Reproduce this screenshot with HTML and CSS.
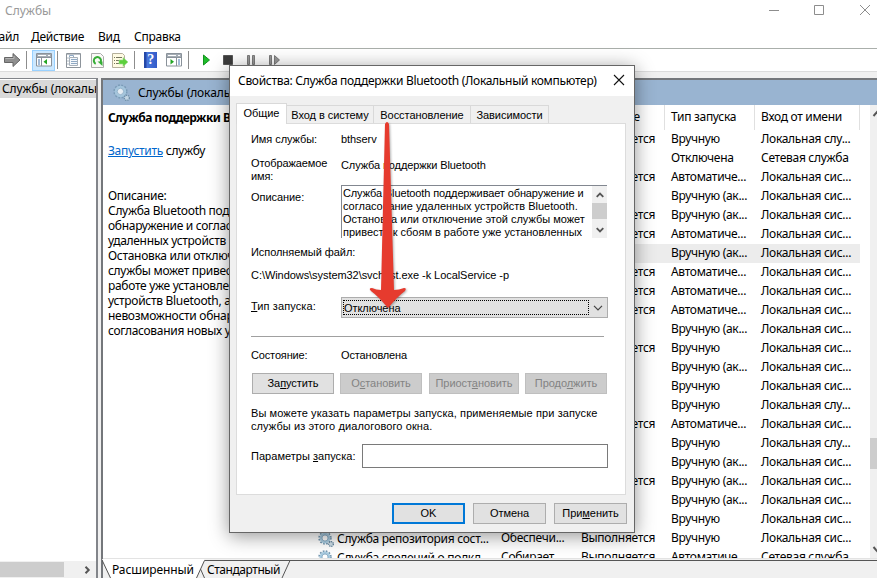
FILE: index.html
```html
<!DOCTYPE html>
<html lang="ru">
<head>
<meta charset="utf-8">
<title>Службы</title>
<link rel="stylesheet" href="styles.css">
</head>
<body>
<svg class="defs" width="0" height="0">
  <symbol id="gear" viewBox="0 0 16 16">
    <circle cx="7" cy="7" r="5.9" fill="none" stroke="#6f93ad" stroke-width="1.6" stroke-dasharray="1.7 1.4"/>
    <circle cx="7" cy="7" r="4.2" fill="#fff" stroke="#a8cbe0" stroke-width="2.4"/>
    <circle cx="7" cy="7" r="3" fill="#fff" stroke="#6f9ab8" stroke-width=".7"/>
    <circle cx="13" cy="13" r="2.4" fill="#cfdfe9" stroke="#62849c" stroke-width="1.3" stroke-dasharray="1.2 .8"/>
  </symbol>
</svg>
<div class="window">
  <header class="titlebar">
    <span class="caption">Службы</span>
    <svg class="winbtns" width="104" height="22" viewBox="0 0 104 22" fill="none" stroke="#8d8d8d">
      <path d="M2 10.500h10M47.500 5.500h9v9h-9zM93 5l10 10M103 5L93 15"/>
    </svg>
  </header>
  <nav class="menu"><span class="m-file">Файл</span><span class="m-action">Действие</span><span class="m-view">Вид</span><span>Справка</span></nav>
  <div class="toolbar">
    <svg class="i-fwd" width="17" height="16" viewBox="0 0 17 16"><path d="M.5 5.500h8.500V1.500L16 8l-7 6.500v-4H.5z" fill="#8f8f8f" stroke="#666"/><path d="M1.500 6.500h8.500V4" fill="none" stroke="#b5b5b5"/></svg>
    <i class="sep s1"></i>
    <span class="pressed"><svg width="16" height="14" viewBox="0 0 16 14"><path d="M.5.5h15v12.500H.5z" fill="#fff" stroke="#8a929a"/><path d="M1 1h14v3H1z" fill="#a5adb5"/><path d="M2 2.500h8M12 2.500h2" stroke="#fff"/><path d="M5.500 5v8M1 4.500h14" stroke="#8a929a"/><path d="M2 7h2M2 9h2M2 11h2" stroke="#4879b0"/><path d="M11 6v5.500L7.500 8.700z" fill="#23a523"/></svg></span>
    <i class="sep s2"></i>
    <svg class="i-prop" width="15" height="15" viewBox="0 0 15 15"><path d="M.5.5h14v14H.5z" fill="#fff" stroke="#8d949b"/><path d="M1 1.500h13" stroke="#bcc2c8"/><path d="M3.500 4.500h8v8h-8z" fill="#f5f8fb" stroke="#a7b0b9"/><path d="M3.500 4V2.500h4V4M5 6.500h6M5 8.500h6M5 10.500h6" fill="none" stroke="#8fa9c4"/><path d="M1.500 5h1M1.500 8h1M1.500 11h1" stroke="#60788f"/></svg>
    <svg class="i-refresh" width="13" height="15" viewBox="0 0 13 15"><path d="M.5.5h9l3 3v11H.5z" fill="#f9f9f6" stroke="#aaa"/><path d="M4.700 10.800a3.600 3.600 0 1 1 4.800-1.300" fill="none" stroke="#36ad36" stroke-width="2"/><path d="M6.500 8.500h5v4.500z" fill="#36ad36"/></svg>
    <svg class="i-export" width="17" height="15" viewBox="0 0 17 15"><path d="M.5.5h10l2 2v12H.5z" fill="#fffbe3" stroke="#b5b09b"/><path d="M2 4.500h1M2 7.500h1M2 10.500h1M4 4.500h6M4 7.500h6M4 10.500h5" stroke="#77765f"/><path d="M7 7h4V4.500L16 9l-5 4.500V11H7z" fill="#5dd03c" stroke="#a0dc8e" stroke-width=".6"/></svg>
    <i class="sep s3"></i>
    <span class="help">?</span>
    <svg class="i-view" width="16" height="14" viewBox="0 0 16 14"><path d="M.5.5h15v12.500H.5z" fill="#fff" stroke="#8a929a"/><path d="M1 1h14v3H1z" fill="#a5adb5"/><path d="M2 2.500h8M12 2.500h2" stroke="#fff"/><path d="M10.500 5v8M1 4.500h14" stroke="#8a929a"/><path d="M12 7h2M12 9h2M12 11h2" stroke="#4879b0"/><path d="M4.500 6v5.500L8 8.700z" fill="#23a523"/></svg>
    <i class="sep s4"></i>
    <svg class="i-run" width="78" height="12" viewBox="0 0 78 12"><path d="M.5 1l6 5-6 5z" fill="#1fbd2b" stroke="#149420"/><path d="M20.500 1.500h9v9h-9z" fill="#3c3c3c" stroke="#555"/><path d="M44.500 1.500h2v9h-2zM49.500 1.500h2v9h-2zM66.500 1.500h2v9h-2zM71.500 1.500l5 4.500-5 4.500z" fill="#999" stroke="#666" stroke-width=".8"/></svg>
  </div>
  <main class="panes">
    <aside class="tree">
      <div class="node">Службы (локальные)</div>
      <div class="hscroll"><i class="hthumb"></i><svg width="8" height="8" viewBox="0 0 8 8"><path d="M1.500.8L4.700 4 1.500 7.200" fill="none" stroke="#555" stroke-width="2"/></svg></div>
    </aside>
    <section class="right">
      <div class="band"><svg width="17" height="17"><use href="#gear"/></svg><span>Службы (локальные)</span></div>
      <div class="content">
        <div class="info">
          <b>Служба поддержки Bluetooth</b>
          <p class="start"><a>Запустить</a> службу</p>
          <p class="desc">Описание:<br>Служба Bluetooth поддерживает<br>обнаружение и согласование<br>удаленных устройств Bluetooth.<br>Остановка или отключение этой<br>службы может привести к сбоям в<br>работе уже установленных<br>устройств Bluetooth, а также к<br>невозможности обнаружения и<br>согласования новых устройств.</p>
        </div>
        <div class="list" id="list">
          <div class="row head"><span>Имя</span><span>Описание</span><span>Состояние</span><span>Тип запуска</span><span>Вход от имени</span></div>
        </div>
        <div class="vscroll"><svg class="up" width="7" height="9" viewBox="0 0 7 9"><path d="M3.500 7L8 2" stroke="#555" stroke-width="2"/></svg><i class="vthumb"></i><svg class="down" width="7" height="9" viewBox="0 0 7 9"><path d="M3.500 2L8 7" stroke="#555" stroke-width="2"/></svg></div>
      </div>
      <div class="viewtabs">
        <svg class="tabshape" width="776" height="19" viewBox="0 0 776 19"><path d="M0 0h102.500l-8 19H9z" fill="#fff"/><path d="M0 1l8.500 18M94.500 19l8-17.500H776M98.500 10l4 9M180 19l8-17.500" fill="none" stroke="#555"/></svg>
        <span class="vt1">Расширенный</span><span class="vt2">Стандартный</span>
      </div>
    </section>
  </main>
</div>

<div class="dialog">
  <div class="dtitle"><span>Свойства: Служба поддержки Bluetooth (Локальный компьютер)</span><svg width="12" height="12" viewBox="0 0 12 12"><path d="M1 1l10 10M11 1L1 11" stroke="#111" stroke-width="1.1"/></svg></div>
  <div class="dtabs"><span class="active">Общие</span><span class="t2">Вход в систему</span><span class="t3">Восстановление</span><span class="t4">Зависимости</span></div>
  <div class="page">
    <div class="field f1"><label>Имя службы:</label><span>bthserv</span></div>
    <div class="field f2"><label>Отображаемое<br>имя:</label><span>Служба поддержки Bluetooth</span></div>
    <div class="field f3"><label>Описание:</label>
      <div class="memo"><p><span class="tight">Служба Bluetooth поддерживает обнаружение и</span><br>согласование удаленных устройств Bluetooth.<br>Остановка или отключение этой службы может<br>привести к сбоям в работе уже установленных</p>
        <div class="mscroll"><svg width="8" height="6" viewBox="0 0 8 6"><path d="M.7 4.800L4 1.500l3.300 3.300" fill="none" stroke="#555" stroke-width="1.800"/></svg><i></i><svg width="8" height="6" viewBox="0 0 8 6"><path d="M.7 1.200L4 4.500l3.300-3.300" fill="none" stroke="#555" stroke-width="1.800"/></svg></div>
      </div>
    </div>
    <div class="exe">Исполняемый файл:</div>
    <div class="path">C:\Windows\system32\svchost.exe -k LocalService -p</div>
    <div class="field f4"><label><u>Т</u>ип запуска:</label><div class="combo"><span>Отключена</span><svg width="10" height="6" viewBox="0 0 10 6"><path d="M1 .8L5 4.800 9 .8" fill="none" stroke="#444" stroke-width="1.200"/></svg></div></div>
    <hr>
    <div class="field f5"><label>Состояние:</label><span>Остановлена</span></div>
    <div class="actions"><button>За<u>п</u>устить</button><button disabled>О<u>с</u>тановить</button><button class="wide" disabled>Приост<u>а</u>новить</button><button disabled>Продо<u>л</u>жить</button></div>
    <p class="hint">Вы можете указать параметры запуска, применяемые при запуске<br>службы из этого диалогового окна.</p>
    <div class="params"><label>Параметры <u>з</u>апуска:</label><input type="text"></div>
  </div>
  <div class="footer"><button class="ok">OK</button><button>Отмена</button><button>При<u>м</u>енить</button></div>
</div>
<svg class="arrow" width="44" height="192" viewBox="0 0 44 192"><path d="M18 4q2-4 4 0L27 170q5 0 10-2 3 0 1 3Q30 177 22 187q-1 1.500-2 0Q12 177 4 171q-3-3 1-3 4 2 9 2z" fill="#e63b2e"/></svg>
<script src="list.js"></script>
</body>
</html>
```
FILE: styles.css
```css
* { box-sizing: border-box; }
body { margin: 0; width: 877px; height: 578px; overflow: hidden; background: #f0f0f0; color: #000; font: 12px/15px "Noto Sans", "Open Sans", sans-serif; letter-spacing: -0.3px; white-space: nowrap; }
p { margin: 0; }
svg { display: block; flex: none; }
.defs { position: absolute; }
.window { display: flex; flex-direction: column; height: 578px; }
.titlebar { height: 24px; background: #fff; display: flex; justify-content: space-between; padding: 0 6px 0 5px; color: #999; line-height: 22px; letter-spacing: 0; }
.menu { height: 24px; background: #fff; display: flex; line-height: 25px; letter-spacing: -.25px; }
.m-file { width: 42px; margin-left: -11px; }
.m-action { width: 67px; }
.m-view { width: 36px; }
.toolbar { height: 24px; background: #fff; border-top: 1px solid #aaafab; border-bottom: 1px solid #dcdcdc; display: flex; align-items: center; padding-left: 4px; }
.sep { width: 1px; height: 18px; background: #8d8d8d; flex: none; }
.s1 { margin-left: 5px; }
.s2 { margin-left: 2px; }
.s3 { margin-left: 5px; }
.s4 { margin-left: 6px; }
.pressed { width: 23px; height: 21px; margin-left: 5px; background: #cce8ff; border: 1px solid #99d1ff; display: flex; align-items: center; justify-content: center; }
.i-prop { margin-left: 8px; }
.i-refresh { margin-left: 10px; }
.i-export { margin-left: 8px; }
.i-view { margin-left: 9px; }
.i-run { margin-left: 14px; }
.help { width: 13px; height: 16px; margin-left: 9px; background: linear-gradient(90deg, #2448a8 2px, #4876dc 3px, #335bc8); color: #fff; font: bold 14px/16px "Liberation Serif", serif; text-align: center; }
.panes { flex: 1; display: flex; padding-top: 6px; min-height: 0; }
.tree { width: 98px; flex: none; background: #fff; border-top: 1px solid #82858a; border-right: 2px solid #82858a; display: flex; flex-direction: column; justify-content: space-between; overflow: hidden; }
.node { margin-top: 1px; height: 18px; width: 96px; padding-left: 2px; line-height: 18px; background: #d9d9d9; overflow: hidden; letter-spacing: -.1px; }
.hscroll { height: 17px; background: #f0f0f0; display: flex; align-items: center; }
.hthumb { width: 64px; height: 15px; background: #cdcdcd; margin-right: 20px; }
.right { flex: 1; margin-left: 3px; min-width: 0; border-left: 2px solid #74777b; border-top: 2px solid #74777b; display: flex; flex-direction: column; }
.band { height: 25px; background: #99b4d1; display: flex; align-items: center; padding-left: 10px; letter-spacing: -.1px; }
.band svg { opacity: .75; }
.band span { margin-left: 8px; }
.content { height: 454px; background: #fff; display: flex; border-bottom: 1px solid #e3e3e3; overflow: hidden; flex: none; }
.info { width: 210px; padding: 5px 0 0 5px; flex: none; overflow: hidden; }
.info b { display: block; line-height: 15px; letter-spacing: -.55px; }
.start { margin-top: 18px; }
.start a { color: #0066cc; text-decoration: underline; }
.desc { margin-top: 30px; }
.list { width: 547px; flex: none; }
.row { display: grid; grid-template-columns: 182px 80px 90px 90px 105px; height: 19px; line-height: 17px; }
.row span { padding-left: 6px; }
.row .name { display: flex; align-items: center; gap: 3px; padding-left: 5px; }
.row.head { height: 25px; line-height: 23px; }
.head span { border-right: 1px solid #e0e0e0; }
.selected { background: #ececec; }
.vscroll { width: 17px; margin-left: 10px; flex: none; background: #f0f0f0; display: flex; flex-direction: column; }
.up { margin-top: 4px; }
.vthumb { height: 31px; background: #cdcdcd; margin-top: 320px; }
.down { margin-top: 76px; }
.viewtabs { position: relative; height: 19px; display: flex; flex: none; letter-spacing: -.1px; }
.tabshape { position: absolute; left: -1px; top: 0; }
.viewtabs span { position: relative; line-height: 21px; }
.vt1 { margin-left: 9px; width: 95px; }
.vt2 { letter-spacing: -.45px; }

.dialog { position: absolute; left: 229px; top: 65px; width: 406px; height: 468px; border: 1px solid #666; background: #f0f0f0; box-shadow: 0 3px 18px rgba(0,0,0,.42); font: 11px/13px "Liberation Sans", sans-serif; letter-spacing: -.06px; }
.dtitle { height: 30px; background: #fff; display: flex; justify-content: space-between; align-items: center; padding: 0 9px 2px 8px; font: 12px/15px "Noto Sans", "Open Sans", sans-serif; letter-spacing: -.3px; }
.dtabs { display: flex; align-items: flex-end; height: 27px; padding: 7px 0 0 6px; }
.dtabs span { height: 18px; line-height: 18px; border: 1px solid #d9d9d9; border-left: 0; border-bottom: 0; text-align: center; }
.dtabs .active { width: 51px; height: 21px; line-height: 19px; background: #fff; border-left: 1px solid #d9d9d9; position: relative; margin-bottom: -1px; }
.t2 { width: 87px; }
.t3 { width: 97px; }
.t4 { width: 78px; }
.page { margin: 0 8px 0 6px; height: 372px; background: #fff; border: 1px solid #dcdcdc; padding: 9px 0 0 14px; }
.field { display: flex; }
.field label { width: 90px; flex: none; }
.f2 { margin-top: 11px; height: 26px; }
.f2 span { margin-top: 2px; }
.f2 { letter-spacing: -.1px; }
.f3 { margin-top: 2px; }
.f3 label { padding-top: 6px; }
.memo { width: 266px; height: 53px; border-top: 1px solid #828790; border-left: 1px solid #828790; display: flex; justify-content: space-between; padding-left: 1px; letter-spacing: -.01px; }
.memo .tight { letter-spacing: -.12px; }
.memo p { padding-top: 1px; }
.mscroll { width: 15px; background: #f0f0f0; display: flex; flex-direction: column; align-items: center; padding: 6px 0 5px; }
.mscroll i { width: 15px; height: 17px; background: #cdcdcd; margin: 5px 0 8px; }
.exe { margin-top: 8px; }
.path { margin-top: 10px; }
.f4 { margin-top: 15px; }
.f4 label { padding-top: 3px; letter-spacing: .1px; }
.combo { width: 267px; height: 21px; border: 1px solid #adadad; background: #e1e1e1; display: flex; align-items: center; justify-content: space-between; padding: 0 4px 0 1px; }
.combo span { width: 246px; height: 15px; border: 1px dotted #000; line-height: 14px; }
hr { width: 353px; height: 1px; border: 0; background: #a0a0a0; margin: 18px 0 12px; }
.f5 { letter-spacing: -.15px; }
button { width: 82px; height: 21px; border: 1px solid #adadad; background: #e1e1e1; padding: 0; color: #000; font: inherit; letter-spacing: inherit; }
button:disabled { background: #ccc; border-color: #bfbfbf; color: #838383; }
.actions { display: flex; gap: 6px; margin: 11px 0 0 1px; }
.actions .wide { width: 90px; margin-left: 1px; }
.hint { margin-top: 13px; letter-spacing: .1px; }
.params { display: flex; align-items: center; margin-top: 11px; letter-spacing: .03px; }
.params label { width: 111px; }
.params input { width: 246px; height: 24px; border: 1px solid #7a7a7a; background: #fff; padding: 0; }
.footer { display: flex; justify-content: flex-end; gap: 8px; padding: 8px 7px 0 0; }
.footer button { width: 73px; }
.footer .ok { border: 2px solid #0078d7; }
u { text-underline-offset: 1px; }
.arrow { position: absolute; left: 367px; top: 120px; filter: drop-shadow(1px 1px 1px rgba(0,0,0,.3)); }
```
FILE: list.js
```javascript
const R = "Выполняется", M = "Вручную", T = "Вручную (ак...", A = "Автоматиче...";
const S = "Локальная сис...", L = "Локальная слу...", N = "Сетевая служба";
const rows = [
  [R, M, L], ["", "Отключена", N], [R, A, S], ["", T, S], [R, T, S], [R, A, S], ["", T, S],
  [R, A, S], [R, A, S], [R, A, S], ["", T, S], [R, M, S], ["", T, S], ["", M, S], ["", M, L],
  [R, A, S], ["", M, L], ["", T, S], [R, T, S], ["", T, S], ["", M, S],
  [R, M, S, "Служба репозитория сост...", "Обеспечи..."],
  [R, A, N, "Служба сведений о подкл...", "Собирает ..."]
];
document.getElementById("list").insertAdjacentHTML("beforeend", rows.map(([state, type, user, name, desc], i) =>
  `<div class="row${i === 6 ? " selected" : ""}"><span class="name">${name ? `<svg width="16" height="16"><use href="#gear"/></svg>${name}` : ""}</span><span>${desc || ""}</span><span>${state}</span><span>${type}</span><span>${user}</span></div>`).join(""));
```
